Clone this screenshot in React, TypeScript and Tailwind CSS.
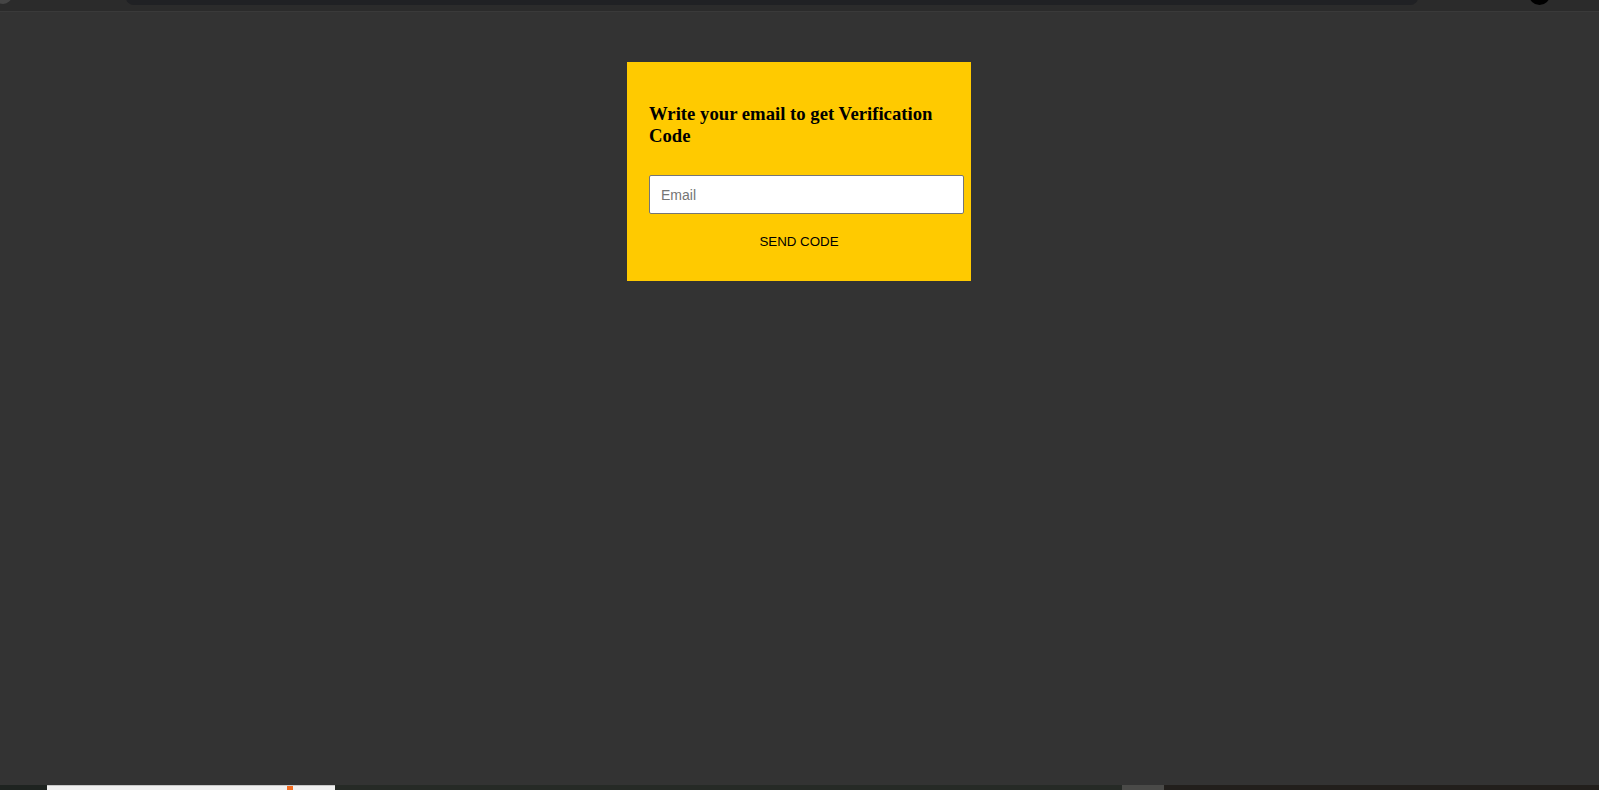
import * as React from 'react'

function TopStrip() {
  return (
    <div className="relative h-[12px] bg-[#2b2b2b] border-b border-[#3a3a3a] overflow-hidden">
      <div className="absolute left-[-6px] top-[-14px] size-[18px] rounded-full bg-[#454545]" />
      <div className="absolute left-[126px] right-[181px] top-[-10px] h-[15px] rounded-[8px] bg-[#202124]" />
      <div className="absolute left-[1529px] top-[-16px] size-[21px] rounded-full bg-black" />
    </div>
  )
}

function BottomStrip() {
  return (
    <div className="flex h-[5px] bg-[#1e2320]">
      <div className="w-[47px]" />
      <div className="relative w-[288px] bg-[#f0f0f0] border-t border-[#c8c8c8]">
        <div className="absolute left-[240px] top-0 w-[6px] h-[4px] bg-[#f36c21]" />
      </div>
      <div className="w-[787px] bg-[#262a26]" />
      <div className="w-[42px] bg-[#4a4a48]" />
      <div className="flex-1 bg-[#221f1c]" />
    </div>
  )
}

export default function App() {
  return (
    <div className="h-screen flex flex-col bg-[#333333]">
      <TopStrip />
      <main className="flex-1 flex justify-center pr-[1px]">
        <div className="mt-[50px] w-[344px] h-[219px] bg-[#ffca00] pt-[41px] px-[22px]">
          <h3
            className="text-[18.72px] font-bold text-black leading-[21.5px]"
            style={{ fontFamily: '"Liberation Serif", "Times New Roman", serif' }}
          >
            Write your email to get Verification Code
          </h3>
          <input
            type="email"
            placeholder="Email"
            className="mt-[29px] block w-[315px] h-[39px] bg-white border border-[#767676] rounded-[2px] px-[11px] text-[14px] text-black placeholder:text-[#757575] outline-none"
            style={{ fontFamily: '"Liberation Sans", Arial, sans-serif' }}
          />
          <button
            className="mt-[20px] block w-full text-center text-[13.33px] leading-[16px] text-black uppercase"
            style={{ fontFamily: '"Liberation Sans", Arial, sans-serif' }}
          >
            Send Code
          </button>
        </div>
      </main>
      <BottomStrip />
    </div>
  )
}
